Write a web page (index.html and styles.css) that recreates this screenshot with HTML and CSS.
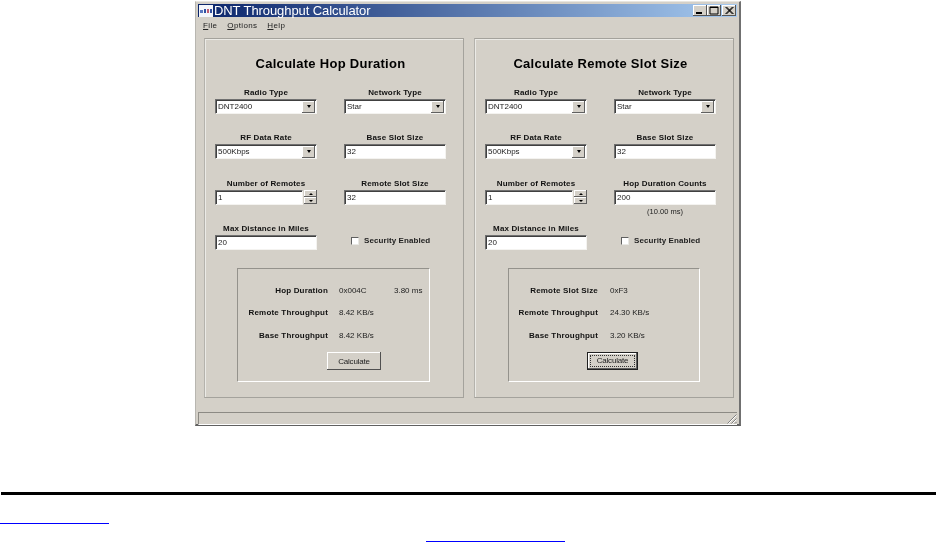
FILE: index.html
```html
<!DOCTYPE html>
<html lang="en">
<head>
<meta charset="utf-8">
<title>DNT Throughput Calculator</title>
<link rel="stylesheet" href="styles.css">
</head>
<body>
<div class="window">
  <div class="titlebar">
    <svg class="app-icon" viewBox="0 0 14 12" width="14" height="12"><rect width="14" height="12" fill="#f4f6fb"/><rect x="1" y="5" width="3" height="3" fill="#5a78c0"/><rect x="5" y="4" width="2" height="4" fill="#3050a0"/><rect x="8" y="4" width="2" height="4" fill="#c05a70"/><rect x="11" y="4" width="2" height="4" fill="#3050a0"/></svg>
    <span class="title-text">DNT Throughput Calculator</span>
    <div class="caption-buttons">
      <span class="caption-btn"><svg viewBox="0 0 14 11" width="14" height="11"><rect x="3" y="7" width="6" height="2" fill="#000"/></svg></span>
      <span class="caption-btn"><svg viewBox="0 0 14 11" width="14" height="11"><path d="M3 2h8v7H3z M3 2.5h8" fill="none" stroke="#000"/></svg></span>
      <span class="caption-btn caption-close"><svg viewBox="0 0 14 11" width="14" height="11"><path d="M3.5 2l7 7M4.5 2l7 7M10.5 2l-7 7M11.5 2l-7 7" fill="none" stroke="#000"/></svg></span>
    </div>
  </div>
  <div class="menubar">
    <span><u>F</u>ile</span>
    <span><u>O</u>ptions</span>
    <span><u>H</u>elp</span>
  </div>
  <div class="panels">
    <section class="panel">
      <h2 class="panel-title">Calculate Hop Duration</h2>
      <div class="fields">
        <div class="cell"><label class="label">Radio Type</label><div class="field combo"><span class="value">DNT2400</span><span class="drop"><i></i></span></div></div>
        <div class="cell"><label class="label">Network Type</label><div class="field combo"><span class="value">Star</span><span class="drop"><i></i></span></div></div>
        <div class="cell"><label class="label">RF Data Rate</label><div class="field combo"><span class="value">500Kbps</span><span class="drop"><i></i></span></div></div>
        <div class="cell"><label class="label">Base Slot Size</label><div class="field"><span class="value">32</span></div></div>
        <div class="cell"><label class="label">Number of Remotes</label><div class="spin-wrap"><div class="field spin-field"><span class="value">1</span></div><div class="spin"><span class="spin-btn"><i class="up"></i></span><span class="spin-btn"><i></i></span></div></div></div>
        <div class="cell"><label class="label">Remote Slot Size</label><div class="field"><span class="value">32</span></div></div>
        <div class="cell"><label class="label">Max Distance in Miles</label><div class="field"><span class="value">20</span></div></div>
        <div class="cell check-cell"><span class="checkbox"></span><span class="check-label">Security Enabled</span></div>
      </div>
      <div class="results">
        <div class="result-grid">
          <span class="r-label">Hop Duration</span><span class="r-value">0x004C</span><span class="r-value">3.80 ms</span>
          <span class="r-label">Remote Throughput</span><span class="r-value">8.42 KB/s</span><span></span>
          <span class="r-label">Base Throughput</span><span class="r-value">8.42 KB/s</span><span></span>
        </div>
        <button class="calc calc-left" type="button">Calculate</button>
      </div>
    </section>
    <section class="panel">
      <h2 class="panel-title">Calculate Remote Slot Size</h2>
      <div class="fields">
        <div class="cell"><label class="label">Radio Type</label><div class="field combo"><span class="value">DNT2400</span><span class="drop"><i></i></span></div></div>
        <div class="cell"><label class="label">Network Type</label><div class="field combo"><span class="value">Star</span><span class="drop"><i></i></span></div></div>
        <div class="cell"><label class="label">RF Data Rate</label><div class="field combo"><span class="value">500Kbps</span><span class="drop"><i></i></span></div></div>
        <div class="cell"><label class="label">Base Slot Size</label><div class="field"><span class="value">32</span></div></div>
        <div class="cell"><label class="label">Number of Remotes</label><div class="spin-wrap"><div class="field spin-field"><span class="value">1</span></div><div class="spin"><span class="spin-btn"><i class="up"></i></span><span class="spin-btn"><i></i></span></div></div></div>
        <div class="cell"><label class="label">Hop Duration Counts</label><div class="field"><span class="value">200</span></div><div class="hint">(10.00 ms)</div></div>
        <div class="cell"><label class="label">Max Distance in Miles</label><div class="field"><span class="value">20</span></div></div>
        <div class="cell check-cell"><span class="checkbox"></span><span class="check-label">Security Enabled</span></div>
      </div>
      <div class="results results-right">
        <div class="result-grid">
          <span class="r-label">Remote Slot Size</span><span class="r-value">0xF3</span><span></span>
          <span class="r-label">Remote Throughput</span><span class="r-value">24.30 KB/s</span><span></span>
          <span class="r-label">Base Throughput</span><span class="r-value">3.20 KB/s</span><span></span>
        </div>
        <button class="calc calc-focus" type="button"><span class="focus-ring">Calculate</span></button>
      </div>
    </section>
  </div>
  <div class="statusbar">
    <svg class="grip" viewBox="0 0 11 11" width="11" height="11"><path d="M10.5 1.5l-9 9M10.5 5.5l-5 5M10.5 9l-1.500 1.500" fill="none" stroke="#808080"/><path d="M10.500 2.500l-8 8M10.500 6.500l-4 4" fill="none" stroke="#fff"/></svg>
  </div>
</div>
<hr class="rule">
<a class="blank-link link-one" href="#" aria-label="Link"></a>
<a class="blank-link link-two" href="#" aria-label="Link"></a>
</body>
</html>
```
FILE: styles.css
```css
html, body { margin: 0; padding: 0; background: #fff; }
body { width: 936px; height: 543px; overflow: hidden; font-family: "Liberation Sans", Arial, sans-serif; }

.window {
  box-sizing: border-box;
  width: 546px;
  height: 425px;
  margin: 1px 0 0 195px;
  padding: 2px 2px 0 2px;
  background: #d4d0c8;
  border-top: 1px solid #e8e6e0;
  border-left: 1px solid #b8b6b0;
  border-right: 2px solid #707070;
  border-bottom: 2px solid #606060;
  color: #000;
  filter: blur(0.4px);
}

.titlebar {
  display: flex;
  align-items: center;
  height: 13px;
  background: linear-gradient(90deg, #0a246a, #a6caf0);
  color: #fff;
}
.app-icon { flex: none; margin-left: 1px; }
.title-text { margin-left: 1px; font-size: 13px; letter-spacing: -0.08px; white-space: nowrap; }
.caption-buttons { display: flex; margin-left: auto; gap: 0; margin-right: 1px; }
.caption-btn {
  display: block;
  box-sizing: border-box;
  width: 14px;
  height: 11px;
  background: #d4d0c8;
  box-shadow: inset -1px -1px 0 #555, inset 1px 1px 0 #fff;
  line-height: 0;
}
.caption-close { margin-left: 1px; }

.menubar {
  display: flex;
  height: 21px;
  box-sizing: border-box;
  padding: 3px 0 0 5px;
  gap: 10px;
  font-size: 8px;
  line-height: 11px;
  color: #222;
  letter-spacing: 0.35px;
}

.panels {
  display: flex;
  gap: 10px;
  padding-left: 6px;
  height: 360px;
}
.panel {
  box-sizing: border-box;
  width: 260px;
  height: 360px;
  border: 1px solid #a4a29c;
  border-left-color: #b4b2ac;
  box-shadow: inset 1px 1px 0 #ebeae6;
}
.panel-title {
  margin: 0;
  height: 48px;
  box-sizing: border-box;
  padding: 16px 7px 0 0;
  font-size: 13px;
  line-height: 17px;
  font-weight: bold;
  text-align: center;
  letter-spacing: 0.28px;
}

.fields {
  display: grid;
  grid-template-columns: 102px 102px;
  grid-template-rows: 45px 46px 45px 27px;
  column-gap: 27px;
  padding-left: 10px;
}
.cell { min-width: 0; }
.label {
  display: block;
  height: 12px;
  font-size: 8px;
  line-height: 12px;
  font-weight: bold;
  text-align: center;
  color: #111;
  letter-spacing: 0.15px;
  white-space: nowrap;
}

.field {
  box-sizing: border-box;
  display: flex;
  align-items: center;
  height: 15px;
  background: #fff;
  border-top: 1px solid #707070;
  border-left: 1px solid #707070;
  border-right: 1px solid #f4f3f0;
  border-bottom: 1px solid #f4f3f0;
  box-shadow: inset 1px 1px 0 #404040;
  padding: 0 0 0 2px;
  font-size: 8px;
  color: #222;
}
.value { flex: 1; white-space: nowrap; }
.combo { padding-right: 1px; }
.drop, .spin-btn {
  box-sizing: border-box;
  flex: none;
  display: flex;
  align-items: center;
  justify-content: center;
  background: #d4d0c8;
  box-shadow: inset -1px -1px 0 #606060, inset 1px 1px 0 #fff;
}
.drop { width: 13px; height: 12px; }
.drop i, .spin-btn i {
  display: block;
  width: 0;
  height: 0;
  border-left: 2.5px solid transparent;
  border-right: 2.5px solid transparent;
  border-top: 3px solid #000;
}
.spin-btn i { border-left-width: 2px; border-right-width: 2px; border-top-width: 2px; }
.spin-btn i.up { border-top: 0; border-bottom: 2px solid #000; }

.spin-wrap { display: flex; gap: 1px; }
.spin-field { width: 88px; }
.spin { display: flex; flex-direction: column; width: 13px; height: 14px; }
.spin-btn { width: 13px; height: 7px; }

.hint { margin-top: 2px; font-size: 7.5px; line-height: 10px; text-align: center; color: #222; }

.check-cell {
  display: flex;
  align-items: center;
  height: 11px;
  padding: 12px 0 0 7px;
}
.checkbox {
  box-sizing: border-box;
  flex: none;
  width: 8px;
  height: 8px;
  background: #fff;
  border-top: 1px solid #606060;
  border-left: 1px solid #606060;
  border-right: 1px solid #e8e8e4;
  border-bottom: 1px solid #e8e8e4;
}
.check-label { margin-left: 5px; font-size: 8px; font-weight: bold; color: #222; letter-spacing: 0.08px; white-space: nowrap; }

.results {
  box-sizing: border-box;
  width: 193px;
  height: 114px;
  margin: 18px 0 0 32px;
  padding-top: 10px;
  border-top: 1px solid #94928c;
  border-left: 1px solid #94928c;
  border-right: 1px solid #fff;
  border-bottom: 1px solid #fff;
}
.results-right { width: 192px; margin-left: 33px; }
.result-grid {
  display: grid;
  grid-template-columns: 90px 44px auto;
  column-gap: 11px;
  grid-auto-rows: 22.5px;
  align-items: center;
  height: 72px;
}
.results-right .result-grid { grid-template-columns: 89px 44px auto; column-gap: 12px; }
.r-label { font-size: 8px; font-weight: bold; text-align: right; color: #111; letter-spacing: 0.18px; white-space: nowrap; }
.r-value { font-size: 8px; color: #222; white-space: nowrap; }

.calc {
  display: block;
  box-sizing: border-box;
  height: 18px;
  margin-top: 1px;
  padding: 0;
  border: 0;
  background: #d4d0c8;
  box-shadow: inset -1px -1px 0 #505050, inset 1px 1px 0 #fff;
  font-family: "Liberation Sans", Arial, sans-serif;
  font-size: 8px;
  letter-spacing: -0.2px;
  color: #222;
}
.calc-left { width: 54px; margin-left: 89px; }
.calc-focus {
  width: 51px;
  margin-left: 78px;
  box-shadow: inset 0 0 0 1px #202020, inset -2px -2px 0 #606060, inset 2px 2px 0 #fff;
}
.focus-ring {
  display: block;
  margin: 3px;
  line-height: 10px;
  border: 1px dotted #333;
}

.statusbar {
  box-sizing: border-box;
  display: flex;
  justify-content: flex-end;
  align-items: flex-end;
  height: 13px;
  margin: 14px 0 0 0;
  border-top: 1px solid #8c8a84;
  border-left: 1px solid #8c8a84;
  border-bottom: 1px solid #fff;
}
.grip { flex: none; }

.rule {
  height: 3px;
  margin: 66px 0 0 1px;
  border: 0;
  background: #000;
}
.blank-link { display: block; height: 1px; background: #0000ff; }
.link-one { width: 109px; margin-top: 28px; }
.link-two { width: 139px; margin: 17px 0 0 426px; }
```
